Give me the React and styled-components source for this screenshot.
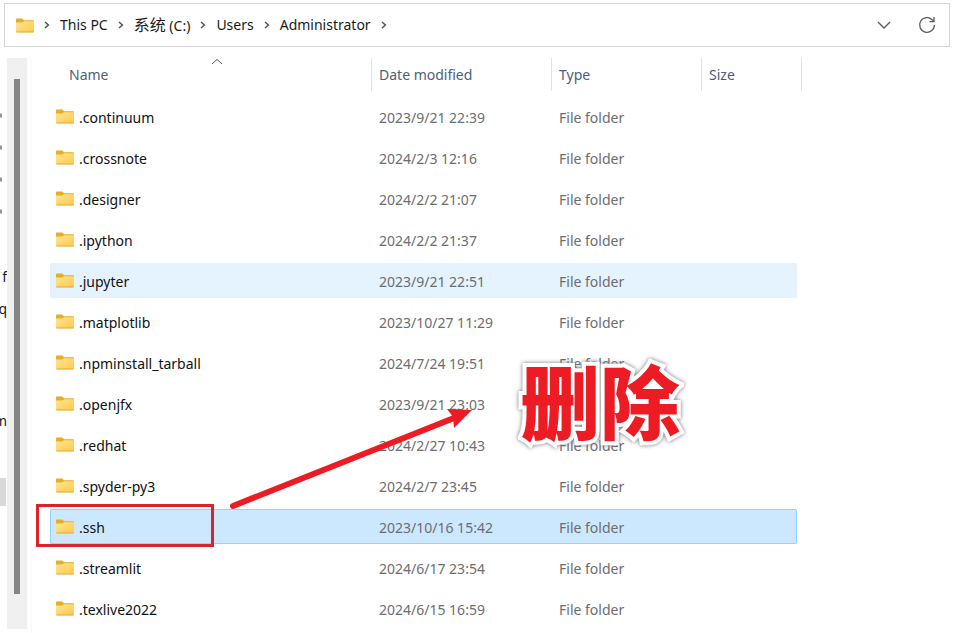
import React from 'react';
import styled, { createGlobalStyle } from 'styled-components';

const GlobalStyle = createGlobalStyle`
  * { box-sizing: border-box; }
  body {
    margin: 0;
    background: #fff;
    color: #1b1b1b;
    font-family: "Noto Sans", "Noto Sans CJK SC", sans-serif;
    font-size: 14px;
    line-height: 20px;
  }
`;

const Window = styled.div`
  display: flex;
  flex-direction: column;
  min-height: 100vh;
  overflow: hidden;
`;

const AddressBar = styled.header`
  display: flex;
  align-items: center;
  height: 44px;
  margin: 3px 4px 0;
  padding: 0 12px 0 11px;
  border: 1px solid #d6d6d6;
`;

const Breadcrumb = styled.nav`
  display: flex;
  flex: 1;
  align-items: center;
  gap: 10px;
`;

const Crumb = styled.a`
  color: inherit;
  text-decoration: none;
  white-space: nowrap;
`;

const DriveLabel = styled.span`
  font-size: 16px;
`;

const IconButton = styled.button`
  display: flex;
  align-items: center;
  justify-content: center;
  width: 20px;
  height: 20px;
  margin-left: 23px;
  padding: 0;
  border: 0;
  background: none;
  color: #5c5c5c;
`;

const Body = styled.div`
  display: flex;
  flex: 1;
  margin-top: 11px;
`;

const NavPane = styled.aside`
  display: flex;
  flex: 0 0 7px;
  flex-direction: column;
  padding-top: 41px;
  overflow: hidden;
`;

const NavItem = styled.div`
  display: flex;
  flex: none;
  align-items: center;
  justify-content: flex-end;
  height: 32px;
  margin-top: ${(p) => p.$before || 0}px;
  padding-right: ${(p) => (p.$dot ? 5 : 0)}px;
  white-space: pre;
`;

const Pin = styled.span`
  width: 5px;
  height: 5px;
  border-radius: 50%;
  background: #8d8d8d;
`;

const NavSelection = styled.div`
  flex: none;
  width: 6px;
  height: 28px;
  margin-top: 41px;
  background: #d9d9d9;
`;

const ScrollTrack = styled.div`
  flex: 0 0 20px;
  margin-bottom: 4px;
  padding: 21px 7px 35px;
  background: #f0f0f0;
`;

const ScrollThumb = styled.div`
  width: 6px;
  height: 100%;
  background: #858585;
`;

const Content = styled.main`
  position: relative;
  flex: 1;
  margin-left: 4px;
  padding: 0 152px 0 18px;
  border-left: 1px solid #fafafa;
`;

const FileTable = styled.table`
  display: block;
`;

const TableHead = styled.thead`
  display: block;
`;

const TableBody = styled.tbody`
  display: flex;
  flex-direction: column;
  gap: 6px;
  margin: 8px 5px 0 0;
`;

const HeadRow = styled.tr`
  display: grid;
  grid-template-columns: minmax(160px, 1fr) 180px 150px 100px;
  height: 33px;
`;

const HeadCell = styled.th`
  position: relative;
  padding: 7px 0 0 ${(p) => (p.$first ? 19 : 7)}px;
  border-right: 1px solid #e2e2e2;
  color: #4c607a;
  font-weight: 400;
  text-align: left;
`;

const SortMark = styled.span`
  position: absolute;
  top: 0;
  left: 50%;
  display: flex;
`;

const rowColours = {
  hover: ['#e5f3ff', '#e5f3ff'],
  selected: ['#cce8ff', '#99d1ff'],
  none: ['transparent', 'transparent'],
};

const FileRow = styled.tr`
  display: grid;
  grid-template-columns: minmax(160px, 1fr) 180px 150px 96px;
  align-items: center;
  height: 35px;
  border-radius: 2px;
  background: ${(p) => rowColours[p.$state][0]};
  box-shadow: inset 0 0 0 1px ${(p) => rowColours[p.$state][1]};
`;

const NameCell = styled.td`
  position: relative;
  display: flex;
  align-items: center;
  gap: 5px;
  height: 35px;
  padding: 0 0 0 6px;
`;

const FileName = styled.span`
  padding-top: 2px;
  color: #111;
`;

const DetailCell = styled.td`
  padding: 2px 0 0 8px;
  color: #6d6d6d;
`;

const RedFrame = styled.span`
  position: absolute;
  top: -5px;
  left: -14px;
  width: 178px;
  height: 43px;
  border: 3px solid #dc2329;
`;

const Arrow = styled.svg`
  position: absolute;
  top: 342px;
  left: 194px;
  pointer-events: none;
`;

const Stamp = styled.strong`
  position: absolute;
  top: 292px;
  left: 488px;
  color: #ed1c24;
  font-family: "Noto Sans CJK SC", sans-serif;
  font-size: 80px;
  font-weight: 900;
  line-height: 96px;
  white-space: nowrap;
  paint-order: stroke fill;
  -webkit-text-stroke: 8px #fff;
  filter: drop-shadow(0 0 2px #777);
  pointer-events: none;
`;

const FolderIcon = () => (
  <svg width="18" height="15" viewBox="0 0 18 15" aria-hidden="true">
    <defs>
      <linearGradient id="folder" x1="0" y1="0" x2="1" y2="1">
        <stop offset="0" stopColor="#ffe596" />
        <stop offset="1" stopColor="#ffc94a" />
      </linearGradient>
    </defs>
    <path d="M0 1.2Q0 .4.8.4h5.6L8 2.2h9.2q.8 0 .8.8V7H0z" fill="#e4ae26" />
    <path d="M0 4.4h6.3L8 3.2h10v10.2q0 .8-.8.8H.8q-.8 0-.8-.8z" fill="url(#folder)" />
    <path d="M.4 14h17.2" stroke="#e0a93a" />
  </svg>
);

const Chevron = () => (
  <svg width="6" height="8" viewBox="0 0 6 8" fill="none" aria-hidden="true">
    <path d="M1 1l3.4 3L1 7" stroke="#555" strokeWidth="1.5" />
  </svg>
);

const crumbs = [
  { id: 'pc', label: 'This PC' },
  { id: 'drive', label: <><DriveLabel>系统</DriveLabel> (C:)</> },
  { id: 'users', label: 'Users' },
  { id: 'admin', label: 'Administrator' },
];

const files = [
  ['.continuum', '2023/9/21 22:39'],
  ['.crossnote', '2024/2/3 12:16'],
  ['.designer', '2024/2/2 21:07'],
  ['.ipython', '2024/2/2 21:37'],
  ['.jupyter', '2023/9/21 22:51', 'hover'],
  ['.matplotlib', '2023/10/27 11:29'],
  ['.npminstall_tarball', '2024/7/24 19:51'],
  ['.openjfx', '2023/9/21 23:03'],
  ['.redhat', '2024/2/27 10:43'],
  ['.spyder-py3', '2024/2/7 23:45'],
  ['.ssh', '2023/10/16 15:42', 'selected'],
  ['.streamlit', '2024/6/17 23:54'],
  ['.texlive2022', '2024/6/15 16:59'],
];

export default function App() {
  return (
    <Window>
      <GlobalStyle />
      <AddressBar>
        <Breadcrumb aria-label="Path">
          <FolderIcon />
          <Chevron />
          {crumbs.map(({ id, label }) => (
            <React.Fragment key={id}>
              <Crumb href="#">{label}</Crumb>
              <Chevron />
            </React.Fragment>
          ))}
        </Breadcrumb>
        <IconButton type="button" aria-label="Previous locations">
          <svg width="14" height="8" viewBox="0 0 14 8" fill="none">
            <path d="M1 1l6 6 6-6" stroke="currentColor" strokeWidth="1.4" />
          </svg>
        </IconButton>
        <IconButton type="button" aria-label="Refresh">
          <svg width="18" height="18" viewBox="0 0 18 18" fill="none" stroke="currentColor" strokeWidth="1.3">
            <path d="M16.4 9a7.4 7.4 0 1 1-2.2-5.3l1.7 1.7" />
            <path d="M16 1v4.6h-4.5" />
          </svg>
        </IconButton>
      </AddressBar>
      <Body>
        <NavPane>
          {[0, 1, 2, 3].map((i) => (
            <NavItem key={i} $dot><Pin /></NavItem>
          ))}
          <NavItem $before={34}>f</NavItem>
          <NavItem>q</NavItem>
          <NavItem $before={80}>m</NavItem>
          <NavSelection />
        </NavPane>
        <ScrollTrack><ScrollThumb /></ScrollTrack>
        <Content>
          <FileTable>
            <TableHead>
              <HeadRow>
                <HeadCell $first scope="col">
                  Name
                  <SortMark>
                    <svg width="12" height="7" viewBox="0 0 12 7" fill="none" aria-hidden="true">
                      <path d="M1 6l5-4.6L11 6" stroke="#555" />
                    </svg>
                  </SortMark>
                </HeadCell>
                <HeadCell scope="col">Date modified</HeadCell>
                <HeadCell scope="col">Type</HeadCell>
                <HeadCell scope="col">Size</HeadCell>
              </HeadRow>
            </TableHead>
            <TableBody>
              {files.map(([name, date, state = 'none']) => (
                <FileRow key={name} $state={state}>
                  <NameCell>
                    <FolderIcon />
                    <FileName>{name}</FileName>
                    {state === 'selected' && <RedFrame />}
                  </NameCell>
                  <DetailCell>{date}</DetailCell>
                  <DetailCell>File folder</DetailCell>
                  <DetailCell />
                </FileRow>
              ))}
            </TableBody>
          </FileTable>
          <Arrow width="250" height="112" viewBox="0 0 250 112" aria-hidden="true">
            <path d="M7 106L228 18" stroke="#ed1c24" strokeWidth="6" strokeLinecap="round" />
            <path d="M246 10L221 9L227 17L228 28Z" fill="#ed1c24" />
          </Arrow>
          <Stamp>删除</Stamp>
        </Content>
      </Body>
    </Window>
  );
}
